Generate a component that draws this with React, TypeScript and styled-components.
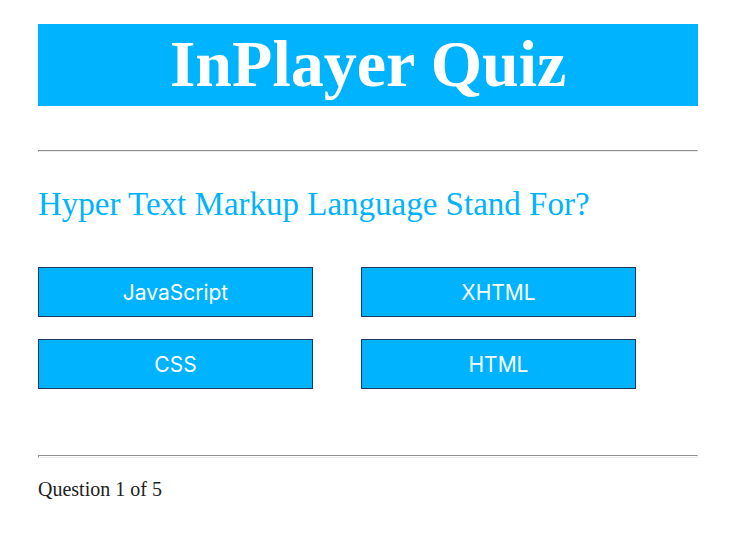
import React from "react";
import styled, { createGlobalStyle } from "styled-components";

const GlobalStyle = createGlobalStyle`
  * { box-sizing: border-box; }
  body {
    margin: 0;
    background: #ffffff;
    color: #212121;
    font-family: "Liberation Serif", "Times New Roman", serif;
  }
`;

const Page = styled.main`
  padding: 24px 33px 24px 38px;
`;

const Title = styled.h1`
  margin: 0 0 44px;
  padding-bottom: 2px;
  background: #00b3ff;
  color: #ffffff;
  font-size: 66px;
  line-height: 80px;
  font-weight: 700;
  text-align: center;
`;

const Rule = styled.hr<{ $height: number }>`
  height: ${({ $height }) => $height}px;
  margin: 0;
  border: 1px solid;
  border-color: #8f8f8f #ececec #ececec #8f8f8f;
`;

const Question = styled.p`
  margin: 32px 0 42px;
  color: #00b3ff;
  font-size: 33px;
  line-height: 41px;
`;

const Answers = styled.div`
  display: grid;
  grid-template-columns: repeat(2, minmax(0, 275px));
  gap: 22px 48px;
  margin-bottom: 66px;
`;

const Answer = styled.button`
  height: 50px;
  padding: 2px 0 0;
  border: 1px solid #17385f;
  border-radius: 0;
  background: #00b3ff;
  color: #ffffff;
  font-family: Inter, sans-serif;
  font-size: 21px;
  font-weight: 400;
  line-height: 28px;
  cursor: pointer;
`;

const Progress = styled.p`
  margin: 19px 0 0;
  font-size: 20px;
  line-height: 24px;
`;

const answers = ["JavaScript", "XHTML", "CSS", "HTML"];

export default function App() {
  return (
    <>
      <GlobalStyle />
      <Page>
        <Title>InPlayer Quiz</Title>
        <Rule $height={2} />
        <Question>Hyper Text Markup Language Stand For?</Question>
        <Answers>
          {answers.map((answer) => (
            <Answer key={answer} type="button">{answer}</Answer>
          ))}
        </Answers>
        <Rule $height={3} />
        <Progress>Question 1 of 5</Progress>
      </Page>
    </>
  );
}
